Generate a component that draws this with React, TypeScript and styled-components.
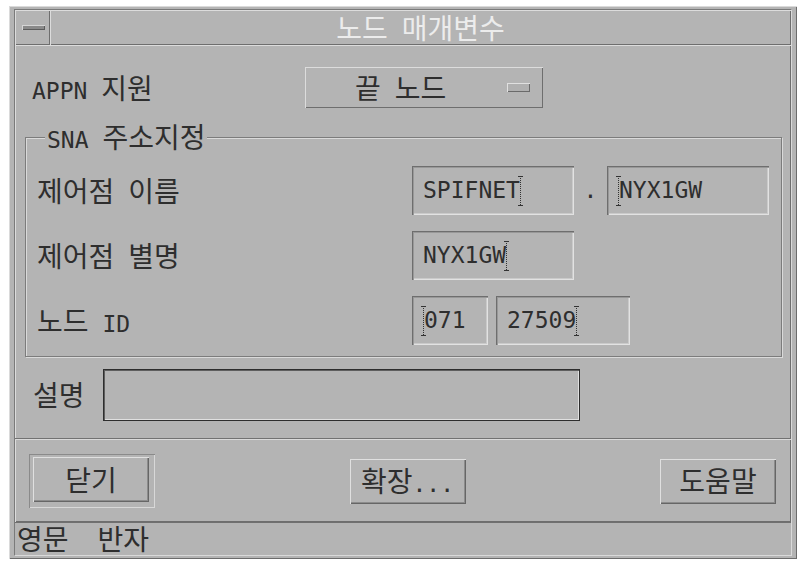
import React from "react";
import styled, { createGlobalStyle } from "styled-components";

const GlobalStyle = createGlobalStyle`
  body {
    margin: 0;
    background: #fff;
    font-family: "DejaVu Sans Mono", "Noto Sans CJK KR", monospace;
    font-size: 23px;
    line-height: 1;
    color: #2e2e2e;
  }
`;

// hangul runs are set double-width, like the terminal-style font of the dialog
const HANGUL = /([가-힣]+)/;

const Han = styled.span`
  font-family: "Noto Sans CJK KR", sans-serif;
  font-size: 28px;
`;

const Txt = ({ children }: { children: string }) => (
  <span>
    {children
      .split(HANGUL)
      .map((part, i) => (HANGUL.test(part) ? <Han key={i}>{part}</Han> : part))}
  </span>
);

const Window = styled.div`
  margin: 6px 0 0 9px;
  width: 788px;
  height: 553px;
  box-sizing: border-box;
  padding: 3px 5px;
  background: #b4b4b4;
  box-shadow: inset 1px 1px 0 #dadada, inset -1px -1px 0 #6c6c6c;
`;

const Inner = styled.div`
  height: 100%;
  box-sizing: border-box;
  display: flex;
  flex-direction: column;
  border: 1px solid;
  border-color: #7a7a7a #dadada #dadada #7a7a7a;
`;

const Raised = `
  box-shadow: inset 1px 1px 0 #dcdcdc, inset -1px -1px 0 #6e6e6e;
`;

const TitleBar = styled.div`
  height: 35px;
  flex-shrink: 0;
  display: flex;
`;

const MenuBox = styled.div`
  width: 35px;
  display: flex;
  align-items: center;
  justify-content: center;
  ${Raised}
`;

const MenuDash = styled.div`
  width: 23px;
  height: 5px;
  margin-left: 2px;
  background: #8a8a8a;
  box-shadow: inset 1px 1px 0 #d6d6d6, inset -1px -1px 0 #5c5c5c;
`;

const Title = styled.div`
  flex: 1;
  display: flex;
  align-items: center;
  justify-content: center;
  white-space: pre;
  color: #ececec;
  ${Raised}
`;

const Body = styled.div`
  flex: 1;
  display: flex;
  flex-direction: column;
  ${Raised}
`;

const Upper = styled.div`
  padding: 22px 9px 17px 10px;
  display: flex;
  flex-direction: column;
`;

const TopRow = styled.div`
  height: 41px;
  display: flex;
  align-items: center;
  padding-left: 7px;
`;

const Label = styled.div<{ $w: number }>`
  width: ${(p) => p.$w}px;
  flex-shrink: 0;
  white-space: pre;
`;

const OptionButton = styled.div`
  width: 238px;
  height: 41px;
  box-sizing: border-box;
  padding: 0 13px 0 50px;
  display: flex;
  align-items: center;
  justify-content: space-between;
  white-space: pre;
  ${Raised}
`;

const Indicator = styled.div`
  width: 23px;
  height: 9px;
  box-sizing: border-box;
  background: #b0b0b0;
  box-shadow: inset 1px 1px 0 #e0e0e0, inset -1px -1px 0 #6a6a6a;
`;

const Group = styled.fieldset`
  margin: 14px 0 0;
  padding: 14px 10px 11px 11px;
  border: 1px solid #7c7c7c;
  box-shadow: inset 1px 1px 0 #dadada, 1px 1px 0 #dadada;
  display: flex;
  flex-direction: column;
  gap: 16px;
  min-width: 0;
`;

const Legend = styled.legend`
  margin-left: 8px;
  padding: 0 2px;
  background: #b4b4b4;
  white-space: pre;
`;

const FormRow = styled.div`
  height: 49px;
  display: flex;
  align-items: center;
`;

const Field = styled.div<{ $w: number }>`
  width: ${(p) => p.$w}px;
  height: 49px;
  flex-shrink: 0;
  box-sizing: border-box;
  padding-left: 11px;
  display: flex;
  align-items: center;
  box-shadow: inset 1px 1px 0 #6e6e6e, inset 2px 2px 0 #989898,
    inset -1px -1px 0 #e2e2e2, inset -2px -2px 0 #cacaca;
`;

const Gap = styled.div<{ $w: number }>`
  width: ${(p) => p.$w}px;
  flex-shrink: 0;
  text-align: center;
`;

// dotted I-beam of an unfocused text field
const Caret = styled.span`
  display: inline-block;
  width: 7px;
  height: 30px;
  margin: 0 -3px;
  background: linear-gradient(#333, #333) center top / 5px 1px no-repeat,
    linear-gradient(#333, #333) center bottom / 5px 1px no-repeat,
    repeating-linear-gradient(to bottom, #333 0 1px, transparent 1px 2px) center /
      1px 100% no-repeat;
`;

const DescRow = styled.div`
  margin-top: 12px;
  height: 52px;
  display: flex;
  align-items: center;
  padding-left: 8px;
`;

const DescField = styled.div`
  width: 477px;
  height: 52px;
  box-sizing: border-box;
  border: 1px solid #2e2e2e;
  box-shadow: inset 1px 1px 0 #5e5e5e, inset -1px -1px 0 #e0e0e0;
`;

const Separator = styled.div`
  height: 0;
  border-top: 1px solid #727272;
  border-bottom: 1px solid #dadada;
`;

const ButtonRow = styled.div`
  flex: 1;
  display: flex;
  align-items: center;
  justify-content: space-between;
  padding: 0 15px 0 14px;
`;

const DefaultFrame = styled.div`
  width: 126px;
  height: 54px;
  box-sizing: border-box;
  padding: 3px 5px 5px 4px;
  display: flex;
  box-shadow: inset 1px 1px 0 #8a8a8a, inset -1px -1px 0 #d8d8d8;
`;

const PushButton = styled.button`
  width: 116px;
  height: 45px;
  flex-shrink: 0;
  padding: 0;
  border: none;
  background: #b4b4b4;
  font: inherit;
  color: inherit;
  white-space: pre;
  box-shadow: inset 1px 1px 0 #e0e0e0, inset -1px -1px 0 #666,
    inset -2px -2px 0 #8c8c8c;
`;

const StatusBar = styled.div`
  height: 33px;
  flex-shrink: 0;
  box-sizing: border-box;
  border-top: 1px solid #707070;
  display: flex;
  align-items: center;
  gap: 29px;
  padding-left: 2px;
`;

const App = () => (
  <>
    <GlobalStyle />
    <Window>
      <Inner>
        <TitleBar>
          <MenuBox>
            <MenuDash />
          </MenuBox>
          <Title>
            <Txt>노드 매개변수</Txt>
          </Title>
        </TitleBar>
        <Body>
          <Upper>
            <TopRow>
              <Label $w={273}>
                <Txt>APPN 지원</Txt>
              </Label>
              <OptionButton>
                <Txt>끝 노드</Txt>
                <Indicator />
              </OptionButton>
            </TopRow>
            <Group>
              <Legend>
                <Txt>SNA 주소지정</Txt>
              </Legend>
              <FormRow>
                <Label $w={375}>
                  <Txt>제어점 이름</Txt>
                </Label>
                <Field $w={162}>
                  SPIFNET
                  <Caret />
                </Field>
                <Gap $w={33}>.</Gap>
                <Field $w={162}>
                  <Caret />
                  NYX1GW
                </Field>
              </FormRow>
              <FormRow>
                <Label $w={375}>
                  <Txt>제어점 별명</Txt>
                </Label>
                <Field $w={162}>
                  NYX1GW
                  <Caret />
                </Field>
              </FormRow>
              <FormRow>
                <Label $w={375}>
                  <Txt>노드 ID</Txt>
                </Label>
                <Field $w={76}>
                  <Caret />
                  071
                </Field>
                <Gap $w={8} />
                <Field $w={134}>
                  27509
                  <Caret />
                </Field>
              </FormRow>
            </Group>
            <DescRow>
              <Label $w={70}>
                <Txt>설명</Txt>
              </Label>
              <DescField />
            </DescRow>
          </Upper>
          <Separator />
          <ButtonRow>
            <DefaultFrame>
              <PushButton>
                <Txt>닫기</Txt>
              </PushButton>
            </DefaultFrame>
            <PushButton>
              <Txt>확장...</Txt>
            </PushButton>
            <PushButton>
              <Txt>도움말</Txt>
            </PushButton>
          </ButtonRow>
        </Body>
        <StatusBar>
          <Txt>영문</Txt>
          <Txt>반자</Txt>
        </StatusBar>
      </Inner>
    </Window>
  </>
);

export default App;
